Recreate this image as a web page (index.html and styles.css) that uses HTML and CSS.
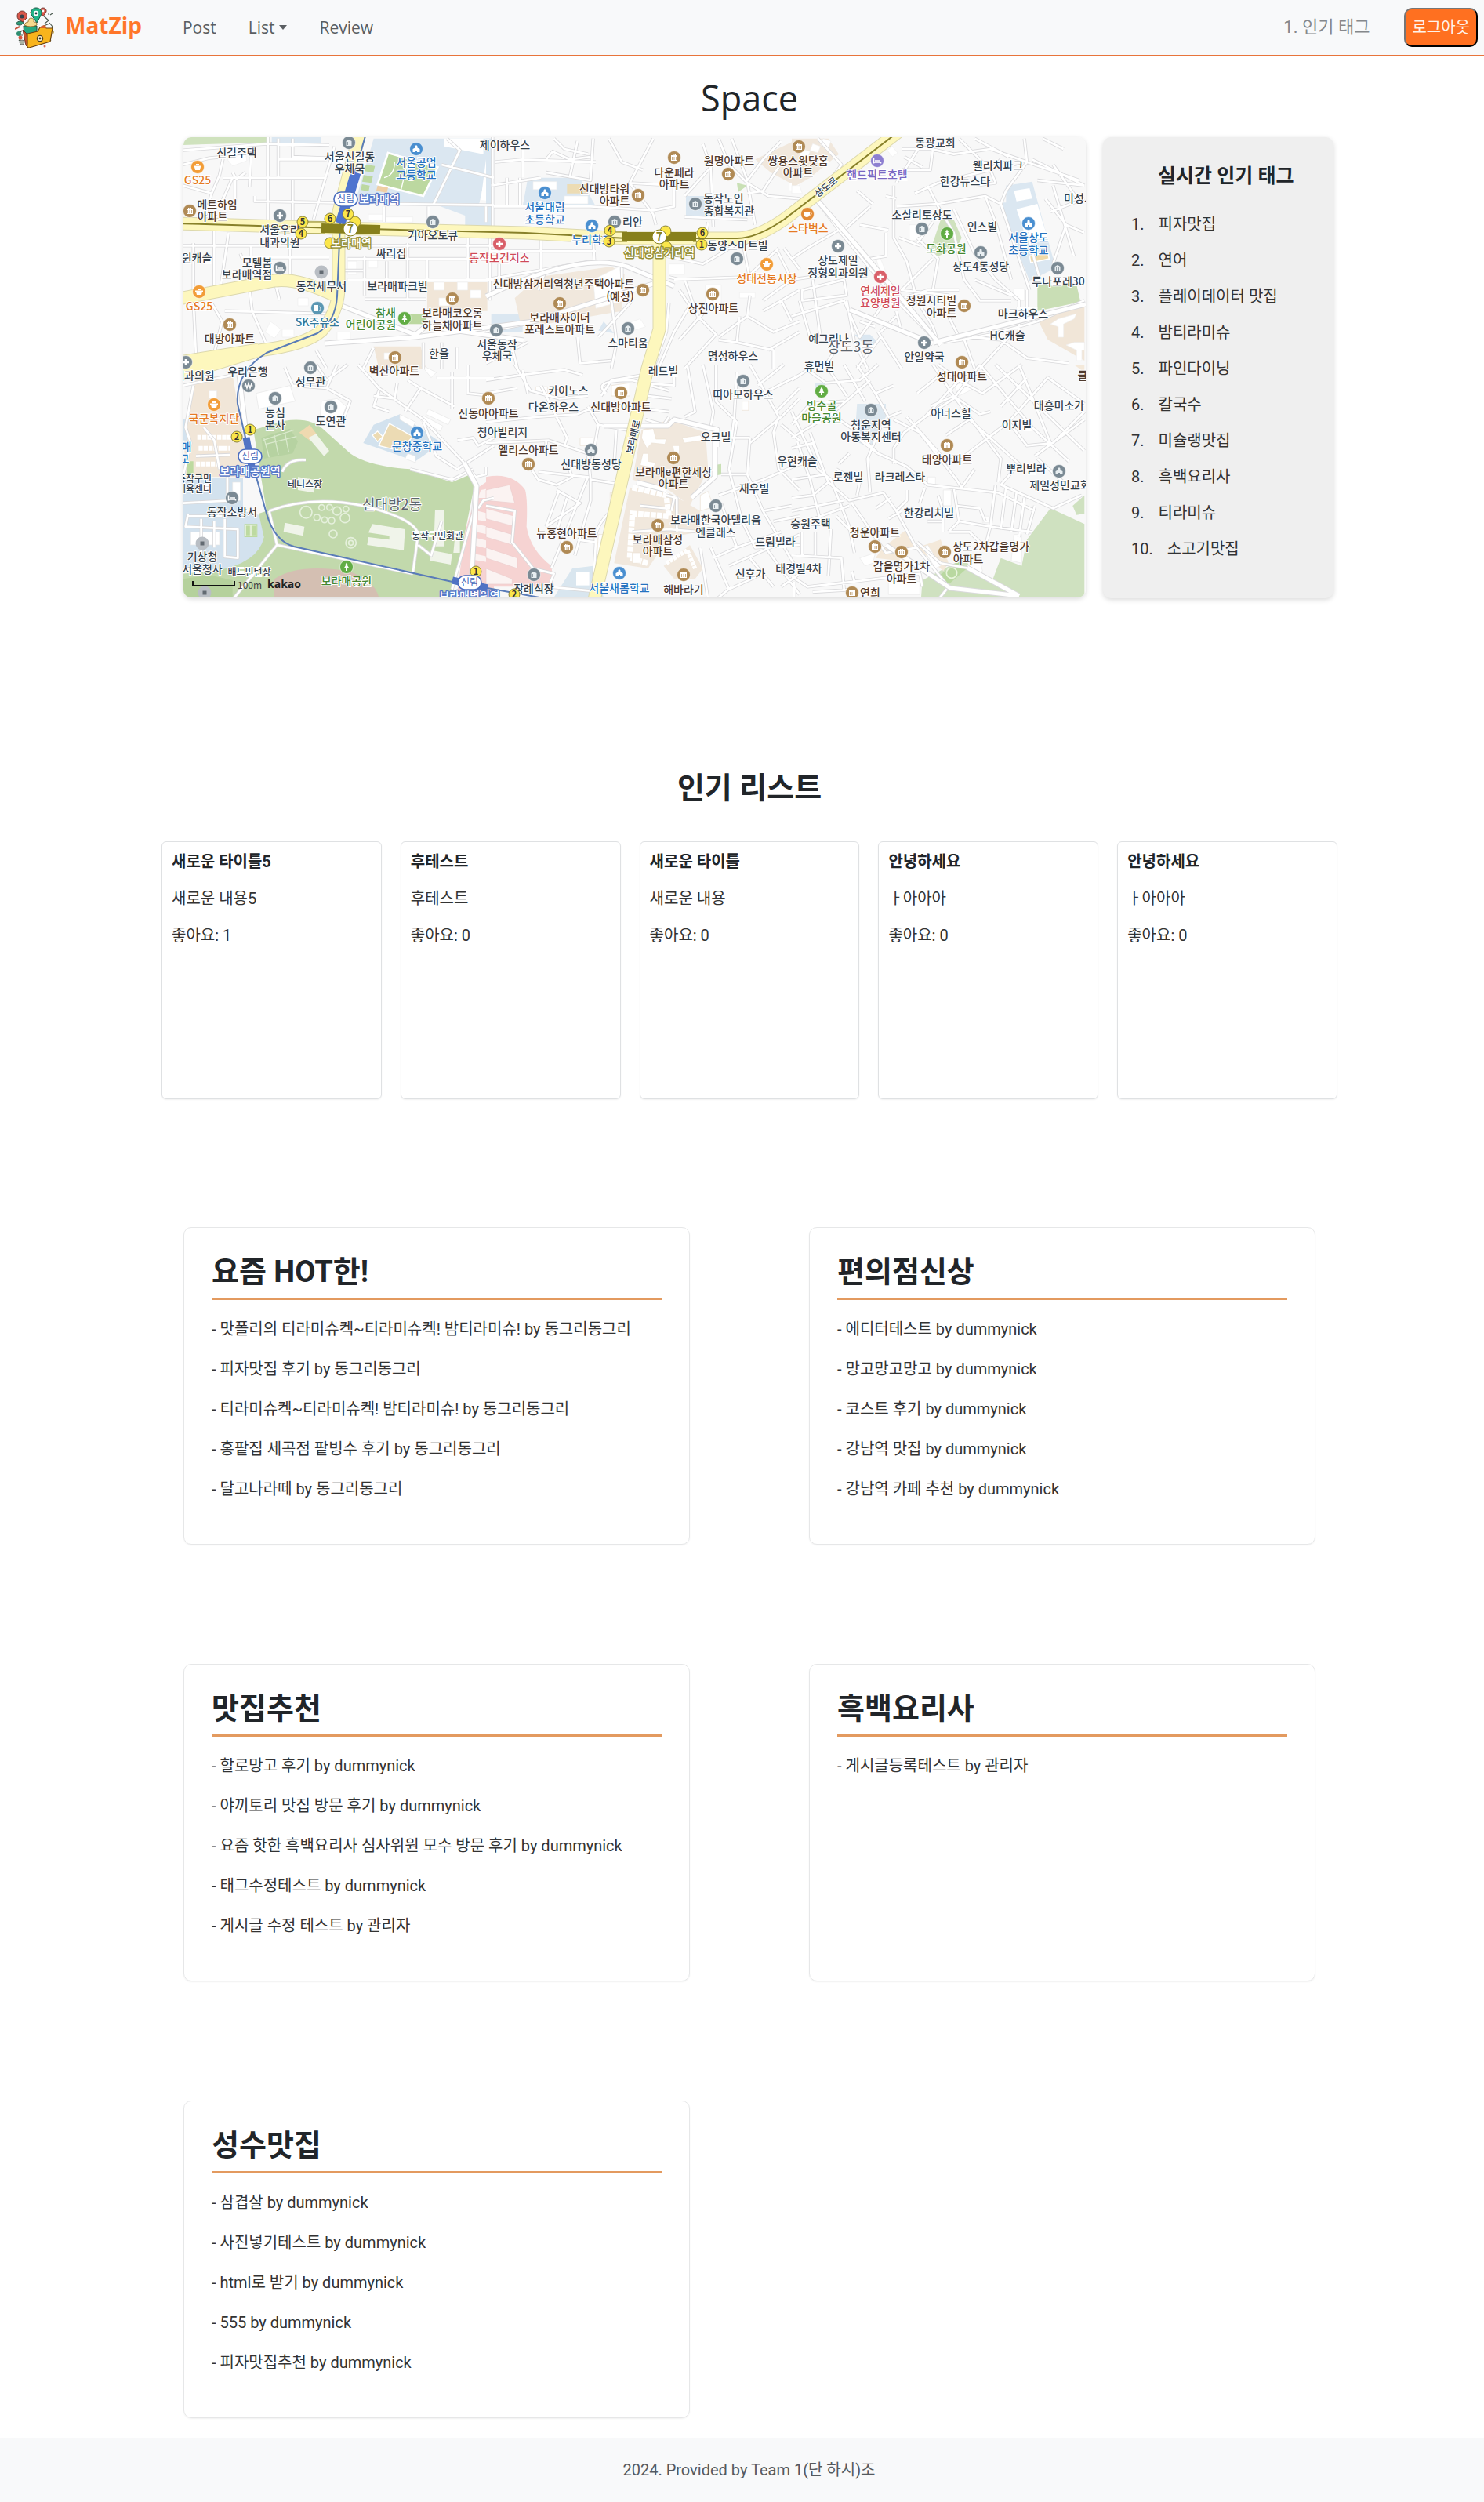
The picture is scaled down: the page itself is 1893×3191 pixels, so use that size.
FILE: index.html
```html
<!DOCTYPE html>
<html lang="ko">
<head>
<meta charset="utf-8">
<title>MatZip</title>
<meta name="viewport" content="width=device-width, initial-scale=1">
<link rel="stylesheet" href="styles.css">
</head>
<body>
<header class="navbar">
  <a class="brand" href="#">
    <svg class="brand-logo" viewBox="0 0 50 52" aria-hidden="true">
      <path d="M9 30l-5 5M8 40l-3 3M45 10l3-2M44 20l4 5-2 6M6 36h4M34 9l9 8-5 4M37 24l7-3M44 41l2 2" stroke="#4c5a50" stroke-width="1.2" fill="none"/>
      <path d="M1 21q6-6 10-1-4 6-10 1z" fill="#2f9b78" stroke="#1d4638" stroke-width=".8"/>
      <path d="M0 28l6-3" stroke="#c7553f" stroke-width="2"/>
      <circle cx="5" cy="34" r="3" fill="#2f8d70"/><circle cx="7" cy="39" r="2.5" fill="#d9573f"/><circle cx="9" cy="45" r="3" fill="#aab3a6" stroke="#555" stroke-width=".7"/>
      <circle cx="47" cy="32" r="2.4" fill="#fff" stroke="#b99b3e"/><circle cx="44" cy="41" r="1.3" fill="#4b6b58"/><circle cx="38" cy="50" r="1.5" fill="#e06a5a"/>
      <circle cx="20" cy="7" r="1" fill="#e06a5a"/><circle cx="43" cy="9" r="1" fill="#888"/>
      <path d="M9 5a6.500 6.500 0 0 1 6 9l-5 5-6-4a6.500 6.500 0 0 1 5-10z" fill="#d8574b" stroke="#5c2720" stroke-width=".8"/>
      <circle cx="9" cy="12" r="2.500" fill="#33404a"/>
      <path d="M36 1a4 4 0 0 1 4 5l-4 6-4-6a4 4 0 0 1 4-5z" fill="#d8574b" stroke="#5c2720" stroke-width=".8"/><circle cx="36" cy="5" r="1.400" fill="#fff"/>
      <path d="M27 1c5 0 8 4 7 8l-6 11-7-10c-2-5 2-9 6-9z" fill="#23b387" stroke="#145541" stroke-width="1"/>
      <circle cx="27" cy="8" r="3.200" fill="#fff"/><circle cx="27" cy="8" r="1.400" fill="#26343a"/>
      <path d="M11 24h17v14H12z" fill="#26a77e" stroke="#18483a"/>
      <path d="M12 23q1-4 5-4 0-5 4-5 4 1 3 5 5 0 4 4-8 4-16 0z" fill="#f7d98e" stroke="#8a6422" stroke-width=".8"/>
      <path d="M10 29l4 20 3 3-2-18z" fill="#c3502b" stroke="#5c2415" stroke-width=".8"/>
      <path d="M16 34l13-3 3-5 5-2 3 3 8 0-3 17-27 8q-3 0-2-5z" fill="#f8b41c" stroke="#6b4310" stroke-width="1.200"/>
      <path d="M32 27l2-3 5-1 1 4z" fill="#d8622d"/>
      <circle cx="32" cy="40" r="3.600" fill="#fff3cf" stroke="#4e4021" stroke-width="1.300"/><circle cx="32" cy="40" r="1.400" fill="#2e3a32"/>
    </svg>
    <span>MatZip</span>
  </a>
  <nav class="menu">
    <a href="#">Post</a>
    <a href="#" class="dropdown">List</a>
    <a href="#">Review</a>
  </nav>
  <div class="account">
    <span class="ticker">1. 인기 태그</span>
    <button type="button" class="logout">로그아웃</button>
  </div>
</header>

<main class="page">
  <h1 class="page-title">Space</h1>

  <section class="hero">
    <svg class="map" viewBox="234 175 1151 587" preserveAspectRatio="xMidYMid slice" role="img" aria-label="Map">
      <defs>
        <g id="apt"><circle r="8.500" fill="#b08a55" stroke="#fff" stroke-width=".6"/><path d="M-4-3h2v-1h1.500v1h1v-1h1.500v1h2v7h-8z" fill="#fff"/><path d="M-2.500-1v4M0-1v4M2.500-1v4" stroke="#b08a55" stroke-width=".7"/></g>
        <g id="bld"><circle r="8.500" fill="#7b8a94" stroke="#fff" stroke-width=".6"/><path d="M-3.500 4v-6l3.500-2 3.500 2v6z" fill="#e8eef1"/><path d="M-1.500-1v4M1.500-1v4" stroke="#7b8a94" stroke-width=".8"/></g>
        <g id="med"><circle r="8.500" fill="#7b8a94" stroke="#fff" stroke-width=".6"/><path d="M0-4v8M-4 0h8" stroke="#fff" stroke-width="2.600"/></g>
        <g id="hos"><circle r="8.500" fill="#d9606a" stroke="#fff" stroke-width=".6"/><path d="M0-4v8M-4 0h8" stroke="#fff" stroke-width="2.600"/></g>
        <g id="sch"><circle r="8.500" fill="#4a8fd0" stroke="#fff" stroke-width=".6"/><path d="M-4.500 4v-4l3-1.500v-2L0-5l1.500 1.500v2l3 1.500v4h-3.500v-2h-2v2z" fill="#fff"/></g>
        <g id="chu"><circle r="8.500" fill="#7b8a94" stroke="#fff" stroke-width=".6"/><path d="M-4.500 4v-4l3-1.500v-2L0-5l1.500 1.500v2l3 1.500v4h-3.500v-2h-2v2z" fill="#e8eef1"/></g>
        <g id="prk"><circle r="8.500" fill="#62ad45" stroke="#fff" stroke-width=".6"/><path d="M0-5.500l2 3.500h-1l2.500 4h-2.500v3h-2v-3h-2.500l2.500-4h-1z" fill="#fff"/></g>
        <g id="shp"><circle r="8.500" fill="#f29d38" stroke="#fff" stroke-width=".6"/><path d="M-4 0h8l-1 4h-6zM-5-1.500h10V0H-5zM-2-4h4v2h-4z" fill="#fff"/></g>
        <g id="caf"><circle r="8.500" fill="#e28a35" stroke="#fff" stroke-width=".6"/><path d="M-4.500-3h7.500v4q-1 3-3.800 3T-4.500 1z" fill="#fff"/><circle cx="3.500" cy="-.5" r="1.600" fill="none" stroke="#fff"/></g>
        <g id="htl"><circle r="8.500" fill="#8d7fd0" stroke="#fff" stroke-width=".6"/><path d="M-4.500-3.500v7M-4.500 2h9v1.500M-3 0H4" stroke="#fff" stroke-width="1.600" fill="none"/></g>
        <g id="inn"><circle r="8.500" fill="#7b8a94" stroke="#fff" stroke-width=".6"/><path d="M-4.500-3.500v7M-4.500 2h9v1.500M-3 0H4" stroke="#fff" stroke-width="1.600" fill="none"/></g>
        <g id="bnk"><circle r="8.500" fill="#7b8a94" stroke="#fff" stroke-width=".6"/><path d="M-4-3.500l2 7 2-7 2 7 2-7M-5.500 0h11" stroke="#fff" stroke-width="1.200" fill="none"/></g>
        <g id="gas"><circle r="8.500" fill="#5b97b3" stroke="#fff" stroke-width=".6"/><path d="M-4-4h5v8h-5z" fill="#fff"/><path d="M2-2l2 1v4h-2" stroke="#fff" fill="none"/></g>
        <g id="gov"><circle r="8.500" fill="#b9bec4"/><path d="M-2.500-2.500h5v5h-5z" fill="#626a72"/></g>
        <g id="ext"><circle r="7" fill="#fbe64b" stroke="#7d7730" stroke-width=".9"/></g>
        <g id="sta"><rect x="-15" y="-9" width="30" height="18" rx="9" fill="#fff" stroke="#4b6dc0" stroke-width="1.600"/></g>
        <g id="streets">
          <g transform="translate(230 170) scale(.3333)">
            <path d="M335 10V345M10 65L335 40L570 45M430 20V90L560 95M375 100L560 100M375 20V170M10 120L110 95L165 90L150 160L120 230L90 340M270 90L265 205M165 170H560M200 150L215 175L250 150M160 260L200 170M285 240V260L590 265M590 50L510 330M780 270L1200 275M1020 20L1070 65L970 270M1000 120L1200 170M780 280V340M950 280V350M10 430H580M230 460L235 475H570M130 360V620M50 420V620M185 380L150 620M270 430V540L240 580M420 430V540M640 480H1200M705 470V620M620 525H700M790 490V560M870 420V640M945 480V560M1100 400V560M640 560H1200M705 635H940M170 680L560 690M265 600L275 680L335 820M50 640L60 850M120 650L160 720L130 840M360 560L380 640M520 830L560 900M740 820L700 900M930 800V900M1000 800V900M1060 820V900M210 180V260M430 180V330M10 200L120 230M640 430L1200 430M1170 280V340"/>
          </g>
          <g transform="translate(620 170) scale(.3333)">
            <path d="M25 10V370M25 30H120M35 110L140 100L420 110M140 20V170M230 100L255 70L320 100L400 90M260 20L300 60L390 80M350 30L320 170M410 20L400 180L230 150M470 20L520 110L600 140M640 20L550 190L640 310L650 350M80 170V280M130 170V280M30 280H400L640 295L720 280V200L550 190M20 200L210 170M830 40L860 130L870 360M890 20L930 120L1000 190L1010 240L1030 350M940 20L1000 180L1060 100L1130 30M860 130L760 240M1000 190L1080 240L1200 250M1000 230L1060 220L1120 130M760 320L1000 330M840 400L850 340M10 450H420M210 400V560M410 410L415 490M0 560L400 490M15 400V640M520 500V570M690 470L830 500L950 430M720 560L1000 550L1120 440M700 650L690 760L640 900M740 600L780 660L720 760L660 900M760 560L810 700L880 770L760 900M830 690L740 790M890 780L1000 700L1010 620M970 700L960 800L890 790M1000 700L1100 760L1200 720M1060 680L1200 600M1110 440L1170 560L1060 640M1130 640L1170 720M1080 830L1200 760M960 800L1100 830V900M0 880L160 800M100 820L120 900M350 780L360 880L480 870M480 640L500 800L480 900M430 780L560 640M0 760L200 720M50 500V560M200 600L230 520M700 550L740 560M650 420V480M985 430L1010 560M1140 440L1200 520"/>
          </g>
          <g transform="translate(1010 170) scale(.3333)">
            <path d="M90 250L180 370L400 640L560 800M100 20L190 120L140 190M400 190L490 50L620 80L760 60L900 110L1100 180M420 60H540L530 140H420M430 90L500 130M390 200V400L440 490L480 640L540 740L560 800M250 220L310 270M360 240L400 250M470 230L560 190L760 140M400 280L560 270L740 240L800 270L910 600M520 200L560 280M640 20L760 140L780 190L700 200M830 90L700 20M890 20L900 110L820 220L800 270M960 20L1040 60M920 100L1120 200M1000 120L1100 260M970 250L1050 350L1000 500M1050 350L1120 380M990 300L1120 250M560 280L620 380L660 560L720 640L840 640M620 290L700 460L780 560L870 640V780M740 240L780 340L840 560M540 480L420 600L600 620M400 640L520 600L640 600M200 370L300 280M180 370L60 440L0 480M260 350L370 370M360 380V470L300 480M200 560L210 620L40 640V600L200 560M200 640L260 780L360 640M210 640L240 800L290 900M0 700L200 640M80 560L110 780M30 640L70 780M340 760L400 700M260 720L320 740M330 760L420 900M400 680L420 760M540 600L560 480L480 400M580 800L650 790L760 770L940 720L1120 640M660 790L700 900M690 780L800 790L900 860L1060 880M830 780L720 900M600 700L640 780M900 600V700M700 560L840 620M860 670H940M410 400L490 430M0 560L140 540M0 330L90 250M760 140L800 100M540 340L480 420M900 380L950 560M940 180L1120 200M1000 200L1080 470M250 900L340 780M120 900L160 840"/>
          </g>
          <g transform="translate(230 465) scale(.3333)">
            <path d="M50 80L20 240L40 300L10 430M90 240L130 290L150 400M60 350L190 345M10 80L200 40M400 10L430 80L560 90L650 140L620 220L560 230M560 90L600 0M520 0L560 60L640 0M680 0L760 90L930 210L1090 380L1130 430M830 70L820 130L740 120M860 180L920 90L870 60M920 90L1050 160M760 100L740 160L800 180M1040 30V170M1100 0V110L1200 120M980 50H1200M930 220L980 350L1060 400L1090 380M1060 290L1120 280L1140 310L1200 280M1090 380L1200 310M880 400L1040 440L1120 400M1130 430L1170 420V390M1130 430L1120 570L1040 860M30 570L20 620L220 630V740L170 735V590M80 590V740M130 600V700M10 530L190 520M30 580H160M180 430V530M1140 550L1160 520L1200 510M200 900L370 690L340 560M370 690L890 800M340 560Q500 500 700 540Q900 590 910 650L890 800M390 410Q410 360 480 365M910 690L960 730L1000 600"/>
          </g>
          <g transform="translate(620 465) scale(.3333)">
            <path d="M0 60L130 40L300 20L370 40M110 0L170 100L280 130L390 120M0 110L120 90M0 220L200 200L350 190L440 150M210 80L310 280L300 310M390 160L430 230L540 250M140 20L160 110M440 120L480 60L600 40M460 110Q400 60 560 60L700 100M0 300L240 290L390 340L400 440L530 460M230 290V330M160 380L200 440L270 460L330 430L310 380L480 380M200 410L390 430L250 780M270 480L360 530L230 620M280 480L230 620M310 510L270 640M400 440V520L340 730M490 550Q410 620 420 680L410 850M350 670L420 680M430 230L400 400M500 230L490 390M600 70L720 80V0M620 120L710 130M610 170L700 180M610 210L680 230L700 200M770 0L800 180L760 200M830 0L870 180L860 240M880 0V140L960 220L930 400L980 600L1030 700L1200 690M960 30L950 200L940 280H1010M1010 0L1120 200L1100 260L1120 400L1200 480M1010 280L1000 420L1060 560L1200 800M1010 300L1130 200L1200 130M1060 110L1200 40M1040 80L1140 0M1110 180L1200 90M1130 230L1200 290M890 500L1060 440L1200 380M900 530L960 700L1130 640M860 700L930 860L1060 800M930 770L1200 650M960 700L870 740M1010 740L1100 850M1060 560L1170 540M1000 420L900 420M1100 600L1200 580M1070 700L1200 880M1130 850L1200 800M820 700L850 900M940 850L880 900M0 540L110 560L100 680L180 780L260 800L240 850L440 870M720 510L710 560M560 640L700 630L820 640M690 500L730 510V640M590 540L690 550"/>
          </g>
          <g transform="translate(1010 465) scale(.3333)">
            <path d="M0 60L60 20L130 70L260 60L330 0M130 0L210 120M200 0L280 140M250 0L320 110L370 200L420 180M320 110L390 80M0 280L150 190L300 60M0 230L70 150L200 140M0 320L80 300L140 450L220 520L350 490L400 560L470 690L600 850L560 900M0 180L100 400L150 440L220 620L240 720M140 450L80 500L0 510M20 290L70 440L110 600M0 390L110 360M0 440L130 420M0 560L200 520M0 620L220 540M70 260L120 400M230 640L170 580M150 190L240 250L330 340L440 390L520 460L790 490L930 560M180 380L220 340M170 400L240 440M390 380V320L430 260L510 200L620 130L720 0M390 210L490 260L630 440L650 470L700 400M440 200L600 380M510 200L640 60L560 0M540 0L620 120L800 360L790 450M480 110L580 30M530 160L620 120L720 190L760 180M590 270L680 210L870 380L800 460M660 350L830 220L980 50L1120 150M720 0L920 240L1060 370M780 0L1120 330M870 0L990 300M640 60L730 110L880 0M830 220L900 310L1000 300L1120 180M800 160L900 50M930 350L1120 210M940 360L1040 450M800 460L1000 550L1110 500M620 470L640 600L600 640M510 470L490 530M440 480V520L400 560M250 500L260 450M320 550L380 510M370 590L420 560M640 600L760 620L920 640M630 540L720 550L740 600M780 460L760 620L740 700L680 640L600 640M820 470L800 630M860 490L840 640M890 510L870 660M930 540L900 650M520 600H580V640M560 500L580 560V600M340 240L290 360L300 490M330 340L250 280M230 530L360 720L480 700M0 730L190 740L200 860M40 640V730M90 640V730M150 630L140 810M0 810L60 850L240 830M230 790L240 830L490 800L500 850M10 830V900M80 870L250 860M480 680L570 760L680 780"/>
          </g>
        </g>
        <g id="avenues">
          <path d="M436 390L530 427L543 416L668 434M414 438L530 430L680 410L833 362M620 378Q740 320 800 340L860 365M1084 395L1190 438M1036 248L1090 310L1200 440M1191 437L1385 388M305 478L316 570M1130 695L1212 750L1300 760M1234 724L1300 760M770 543H852L860 535L915 548V570M812 615L850 625M882 635L912 608V550M600 765L608 620L592 590"/>
        </g>
      </defs>
      <rect x="234" y="175" width="1151" height="587" fill="#f8f8f8"/>

      <!-- land use -->
      <g transform="translate(230 170) scale(.3333)">
        <path d="M10 15h330v20L10 45z" fill="#cfe2bd"/><path d="M350 10h190v30H350zM740 20L1200 20L1130 330L970 270L670 260z" fill="#dbe7f1"/>
        <path d="M795 75L985 130L930 240L755 195z" fill="#bcd8a0" stroke="#fff" stroke-width="8"/><path d="M875 90L845 215M780 170q40-10 40-60" stroke="#fff" stroke-width="4" fill="none"/>
        <path d="M710 120l35 5-6 25-35-5zM702 160l35 5-6 25-35-5zM695 195l30 5-4 22-30-5z" fill="#bcd8a0"/><path d="M755 200l40 8-5 20-40-8z" fill="#efcfa5"/>
        <path d="M945 570h230v110H945zM740 815h180l20 85H760z" fill="#f1e6d8"/><path d="M850 690h90v40h-90z" fill="#bcd8a0"/>
        <path d="M1090 280h100v75h-100z" fill="#dbe7f1"/><path d="M1010 20h150v60l-150-30zM1170 100h30v160l-50-5z" fill="#fff"/>
        <path d="M180 100l70-25 5 30-55 20zM720 310h55v25h-55zM780 320h110v20H780zM450 630h40v30h-40zM640 490h35v50h-35zM720 485h35v30h-35zM345 720l40 30-25 35-35-25zM390 750h45v30h-45zM600 760h50v30h-50zM970 570h40v30h-40zM1060 570h40v30h-40zM1110 600h40v30h-40zM990 630h40v30h-40zM780 840h40v25h-40z" fill="#fff" stroke="#eee" stroke-width="2"/>
      </g>
      <g transform="translate(620 170) scale(.3333)">
        <path d="M0 20h20v340H0zM160 170h200l60 110H140zM765 240h90v80h-90zM20 690h120v70H20zM450 720l40 45-60-10z" fill="#dbe7f1"/><path d="M310 195h80v35h-80z" fill="#ecdcb4"/>
        <path d="M110 630L200 550L480 510L530 540L520 680L230 730L130 720zM1030 100L1200 20V210L1090 150z" fill="#f1e8dd"/>
        <path d="M960 190l40 10-35 25z" fill="#c9e0b5"/><path d="M180 185h90v30h-90zM410 560l100-50 20 130-110 30zM300 240h90v30h-90zM840 580h60v80h-60zM530 730l60-20 20 30-60 20zM700 500h60v40h-60zM1160 190h40v30h-40zM970 610h60v20h-60z" fill="#fff" stroke="#eee" stroke-width="2"/>
      </g>
      <g transform="translate(1010 170) scale(.3333)">
        <path d="M0 20h140l40 60-110 90-70 40z" fill="#f1e8dd"/><path d="M820 200l100-15 90 330-100 50-120-300 30 0zM240 770h60l30 30-50 10z" fill="#dbe7f1"/><path d="M850 220l60-10 10 40-60 10zM860 290l80-20 20 70 20 60-80 10z" fill="#fff"/><path d="M910 470l70-15 5 25-70 15z" fill="#efd9a8" stroke="#fff" stroke-width="5"/>
        <path d="M570 330h50l30 70-20 40-70 30-30-20z" fill="#cfe2bd"/><path d="M940 580h150l15 65-165 35z" fill="#c9deb5"/><path d="M940 710L1120 650V870L980 790z" fill="#f1e6d8"/>
        <path d="M120 20l30 10-10 25-30-10zM80 40l30 10-10 25-30-10zM40 60l30 10-10 25-30-10zM0 200h30l10 30H0zM320 470l20 10 20 50-20 10zM365 65l20-15 20 25-20 15zM450 350h40v60h-40zM850 595h40v45h-40zM990 730l30-20 70-20-10 20-40 20v50h-20v-40zM1050 810l30-10 40 0v30h-10v40h-20v-40z" fill="#fff" stroke="#eee" stroke-width="2"/>
      </g>
      <g transform="translate(230 465) scale(.3333)">
        <path d="M60 50L200 40L240 270L250 430L20 430L15 300z" fill="#f1e6d8"/><path d="M10 435H240V560L320 580V700L250 790L10 780zM10 210h15v80H10zM840 190L1000 300L900 370L700 300L740 230z" fill="#d3e2ee"/>
        <path d="M800 225l90 50-50 55-80-20zM735 270l20-15 20 20-20 20z" fill="#ecdbb4" stroke="#fff" stroke-width="4"/>
        <path d="M280 250L400 215Q500 200 550 250L650 340Q720 390 880 400L1040 450L1110 420L1130 440L1040 890H10V800L130 790Q300 760 320 660L300 570L330 560z" fill="#c2d9ac"/>
        <path d="M360 890V820Q450 760 640 790Q740 820 760 890z" fill="#d4bfb2"/><path d="M10 820l100-15 90 20v65H10z" fill="#b5d19c"/>
        <path d="M310 280l110-35 30 50-20 45-110 20z" fill="#b6d2a1"/><path d="M315 290l120-40M325 305l120-30M320 280l20 75M360 270l15 75M400 260l15 75" stroke="#d9e9cc" stroke-width="4"/>
        <path d="M455 260l40-30 30 40-30 20z" fill="#efd9b0"/><path d="M490 280l30-15 50 65-20 20zM400 605l75 15-5 35-75-15zM735 610l125 20-5 80-140-20 5-30 80 10v-15l-80-12zM975 555h35v140h-40zM960 710l80 15-5 40-80-15zM450 430l60 10v50l-60-10zM1050 670h20v50h-25z" fill="#f0f4ea"/>
        <path d="M245 610h50v50h-50zM25 370h25v50H25z" fill="#bddaa0"/><path d="M250 615h18v40h-18zM272 615h18v40h-18z" stroke="#fff" stroke-width="2" fill="none"/>
        <g fill="none" stroke="#e5f0dc" stroke-width="5"><circle cx="481" cy="565" r="23"/><circle cx="541" cy="547" r="11"/><circle cx="571" cy="546" r="11"/><circle cx="600" cy="560" r="16"/><circle cx="634" cy="553" r="11"/><circle cx="630" cy="587" r="18"/><circle cx="523" cy="585" r="12"/><circle cx="552" cy="594" r="11"/><circle cx="579" cy="597" r="12"/><circle cx="585" cy="648" r="15"/><circle cx="653" cy="682" r="20"/><circle cx="653" cy="682" r="9"/></g>
        <path d="M1140 470L1200 430V870H1060L1090 640z" fill="#f6d3d2"/><path d="M1150 480l50-10v40h-60zM1140 560l60 15v30l-60-10zM1130 610l70 15v30l-70-15zM1120 660l80 20v30l-80-20zM1110 720l90 20v20l-90-15z" fill="#fbf3f2"/>
        <path d="M290 110L420 80L440 140L300 170zM540 140l60-10 35 30-20 50-80-10zM110 100h30v30h-30zM40 640h110v50H40zM200 450h30v70h-30zM920 0l60 30-20 20zM840 190l60 30-10 20-50-30zM870 340l30 10v25l-40-15zM950 170l85 40-10 20-85-40zM930 195l75 40-10 20-75-40z" fill="#fff" stroke="#e6e6e6" stroke-width="2"/>
        <path d="M65 278H220M70 320H190M60 380H150" stroke="#fff" stroke-width="18" stroke-dasharray="16 3"/>
      </g>
      <g transform="translate(620 465) scale(.3333)">
        <path d="M0 430Q100 410 150 480Q160 520 155 620Q170 710 250 770L260 850H0z" fill="#f6d3d2"/><path d="M0 480l90-20 20 70-110-10zM0 550l110 30v40L0 590zM0 620l100 30v40L0 660zM0 700l120 40v40L0 740zM0 780l100 40v20H0z" fill="#fbf3f2" stroke="#eccccb" stroke-width="2"/>
        <path d="M330 780l80-10 40 120H260z" fill="#d9e6ef"/><path d="M345 795h50v50h-50z" fill="#fff"/>
        <path d="M595 250L700 210L840 260L850 400L780 540L700 480L560 440zM550 470L700 490L820 560V640L700 660L620 780L490 760zM680 770L780 690L830 780L800 820L720 820z" fill="#f1e8dd"/><path d="M870 385l30-5v40l-25 5z" fill="#c9e0b5"/>
        <path d="M560 470L690 500L700 580L560 570L550 740L620 760" fill="none" stroke="#fff" stroke-width="22" stroke-dasharray="20 4"/><path d="M690 760L770 710L800 780" fill="none" stroke="#fff" stroke-width="16" stroke-dasharray="13 3"/>
        <path d="M600 250l40-5 10 40 40 0-5 20-50-5-20 20-10-20-10-20zM750 280l70-10 10 20-70 10zM600 340h20v30l30 5-10 20-50-10zM820 500l30-15 20 60-50 15zM430 650h30l-5 75h-30zM475 490h20v40h-20zM560 720h30v40h-30zM980 140h25v35h-25zM480 80l70-10v50h-70zM190 85h45v25h-45zM360 280h50v30h-50zM715 310l25 0v30h-20z" fill="#fff" stroke="#eadfd2" stroke-width="2"/>
      </g>
      <g transform="translate(1010 465) scale(.3333)">
        <path d="M500 825L660 740L700 800L870 890H495zM770 820L800 740L880 770L900 670L990 550L1120 610V890H780zM1075 540l45-40v70l-30 5z" fill="#cfe1c0"/><path d="M560 810l80-60 30 30-80 70z" fill="#b9d8a0"/><circle cx="612" cy="797" r="20" fill="none" stroke="#e8f4dc" stroke-width="5"/>
        <path d="M250 150h110v50l-60 120-60-30zM90 70h40v40H90z" fill="#dde8f0"/><path d="M350 700l90-70 30 60-60 60-90-10zM480 700l90-30 30 90-20 30zM1080 0h40v30z" fill="#f4e9da"/>
        <path d="M620 80l50-20 30 30-60 30zM520 430h30v30h-30zM850 650h30v110l-40-10zM260 740l60-20-10 40-30 10zM500 700l20-10 50 80-20 10zM370 830h120v50H370zM670 770l50-20 10 40-20 10zM730 580h25v25h-25zM580 480h30v60h-30z" fill="#fff" stroke="#e8e8e8" stroke-width="2"/>
      </g>

      <!-- streets: casing, then surface -->
      <use href="#streets" class="street-case"/><use href="#streets" class="street-top"/>
      <use href="#avenues" class="avenue-case"/><use href="#avenues" class="avenue-top"/>
      <g class="trunk-case">
        <path d="M228 285L430 291L670 297L800 304H940Q965 304 1000 280L1150 165"/><path d="M459 170L432 270V370Q430 400 410 422Q390 440 330 447L228 478"/><path d="M228 381L350 358Q380 354 430 378M228 462L330 446M841 305V420L826 470L758 765"/>
      </g>
      <g class="trunk-top">
        <path d="M228 285L430 291L670 297L800 304H940Q965 304 1000 280L1150 165"/><path d="M459 170L432 270V370Q430 400 410 422Q390 440 330 447L228 478"/><path d="M228 381L350 358Q380 354 430 378M228 462L330 446M841 305V420L826 470L758 765"/>
      </g>
      <path d="M228 285L430 291L670 297L800 304H940Q965 304 1000 280L1150 165" fill="none" stroke="#88812a" stroke-width="2"/>
      <path d="M467 170L434 285L430 378Q428 410 405 425L340 450Q300 475 303 515L314 562L340 655Q350 690 375 697L577 742L705 765" fill="none" stroke="#5a7cb8" stroke-width="2"/>
      <path d="M454 220L434 285" stroke="#4f74cf" stroke-width="13"/><path d="M314 558L322 600M577 740L622 750" stroke="#5173c4" stroke-width="9"/>
      <path d="M410 291L485 293M794 302H888" stroke="#87801c" stroke-width="12"/>
      <path d="M390 283H414M390 298H414M784 296H800V308H784M890 298H884V308H890" fill="none" stroke="#87801c"/>

      <!-- places -->
      <g>
        <use href="#shp" x="252" y="213"/><use href="#apt" x="242" y="269"/><use href="#bld" x="445" y="182"/><use href="#sch" x="531" y="190"/><use href="#med" x="357" y="275"/><use href="#bld" x="552" y="283"/><use href="#inn" x="357" y="342"/><use href="#gov" x="410" y="347"/><use href="#shp" x="254" y="372"/><use href="#gas" x="405" y="393"/><use href="#prk" x="516" y="406"/><use href="#apt" x="577" y="381"/><use href="#apt" x="293" y="414"/><use href="#bld" x="633" y="421"/><use href="#apt" x="504" y="456"/><use href="#med" x="237" y="462"/><use href="#bnk" x="317" y="492"/><use href="#bld" x="396" y="469"/><use href="#bld" x="351" y="508"/><use href="#bld" x="422" y="519"/><use href="#shp" x="273" y="516"/><use href="#inn" x="296" y="635"/><use href="#gov" x="258" y="693"/><use href="#gov" x="261" y="756"/><use href="#prk" x="442" y="723"/><use href="#apt" x="623" y="508"/><use href="#sch" x="532" y="552"/>
        <use href="#sch" x="695" y="246"/><use href="#apt" x="814" y="249"/><use href="#sch" x="755" y="288"/><use href="#bld" x="784" y="283"/><use href="#apt" x="860" y="201"/><use href="#apt" x="929" y="222"/><use href="#apt" x="1019" y="187"/><use href="#bld" x="887" y="260"/><use href="#bld" x="940" y="330"/><use href="#caf" x="1030" y="273"/><use href="#shp" x="978" y="337"/><use href="#hos" x="637" y="311"/><use href="#apt" x="820" y="370"/><use href="#apt" x="714" y="387"/><use href="#bld" x="801" y="419"/><use href="#apt" x="909" y="375"/><use href="#apt" x="792" y="501"/><use href="#bld" x="948" y="486"/><use href="#apt" x="674" y="592"/><use href="#chu" x="754" y="574"/><use href="#apt" x="859" y="584"/><use href="#bld" x="913" y="645"/><use href="#apt" x="839" y="670"/><use href="#apt" x="723" y="698"/><use href="#apt" x="872" y="733"/><use href="#sch" x="790" y="731"/><use href="#bld" x="681" y="733"/>
        <use href="#htl" x="1119" y="205"/><use href="#bld" x="1176" y="292"/><use href="#prk" x="1208" y="298"/><use href="#sch" x="1312" y="285"/><use href="#chu" x="1251" y="322"/><use href="#bld" x="1349" y="342"/><use href="#med" x="1069" y="314"/><use href="#hos" x="1123" y="353"/><use href="#apt" x="1230" y="390"/><use href="#med" x="1179" y="437"/><use href="#apt" x="1227" y="462"/><use href="#prk" x="1048" y="499"/><use href="#bld" x="1111" y="523"/><use href="#apt" x="1208" y="568"/><use href="#chu" x="1351" y="601"/><use href="#apt" x="1116" y="697"/><use href="#apt" x="1150" y="704"/><use href="#apt" x="1205" y="704"/><use href="#apt" x="1087" y="756"/>
      </g>
      <g class="label">
        <text x="302" y="200">신길주택</text><text x="446" y="205">서울신길동</text><text x="446" y="220">우체국</text><text x="357" y="298">서울우리</text><text x="357" y="314">내과의원</text><text x="552" y="305">기아오토큐</text><text x="251" y="334">원캐슬</text><text x="499" y="328">싸리집</text><text x="328" y="340">모텔봄</text><text x="315" y="355">보라매역점</text><text x="410" y="370">동작세무서</text><text x="507" y="370">보라매파크빌</text><text x="560" y="456">한울</text><text x="634" y="444">서울동작</text><text x="634" y="459">우체국</text><text x="248" y="484">내과의원</text><text x="316" y="479">우리은행</text><text x="396" y="492">성무관</text><text x="351" y="531">농심</text><text x="351" y="547">본사</text><text x="422" y="542">도연관</text><text x="296" y="658">동작소방서</text><text x="258" y="715">기상청</text><text x="258" y="731">서울청사</text><text x="641" y="556">청아빌리지</text>
        <text x="644" y="190">제이하우스</text><text x="807" y="288">리안</text><text x="923" y="258">동작노인</text><text x="930" y="274">종합복지관</text><text x="941" y="318">동양스마트빌</text><text x="801" y="442">스마티움</text><text x="935" y="459">명성하우스</text><text x="846" y="478">레드빌</text><text x="725" y="503">카이노스</text><text x="706" y="524">다온하우스</text><text x="948" y="508">띠아모하우스</text><text x="913" y="562">오크빌</text><text x="754" y="597">신대방동성당</text><text x="1017" y="593">우현캐슬</text><text x="962" y="628">재우빌</text><text x="913" y="668">보라매한국아델리움</text><text x="913" y="684">엔클래스</text><text x="989" y="696">드림빌라</text><text x="1034" y="673">승원주택</text><text x="957" y="737">신후가</text><text x="1019" y="730">태경빌4차</text><text x="681" y="756">장례식장</text>
        <text x="1193" y="187">동광교회</text><text x="1273" y="216">웰리치파크</text><text x="1231" y="236">한강뉴스타</text><text x="1372" y="258">미성.</text><text x="1176" y="279">소살리토상도</text><text x="1253" y="294">인스빌</text><text x="1251" y="345">상도4동성당</text><text x="1350" y="364">루나포레30</text><text x="1069" y="337">상도제일</text><text x="1069" y="353">정형외과의원</text><text x="1305" y="405">마크하우스</text><text x="1285" y="433">HC캐슬</text><text x="1057" y="437">예그리나</text><text x="1179" y="460">안일약국</text><text x="1045" y="472">휴먼빌</text><text x="1111" y="547">청운지역</text><text x="1111" y="562">아동복지센터</text><text x="1213" y="532">아너스힐</text><text x="1351" y="522">대흥미소가</text><text x="1297" y="547">이지빌</text><text x="1309" y="603">뿌리빌라</text><text x="1352" y="624">제일성민교회</text><text x="1082" y="613">로젠빌</text><text x="1148" y="613">라크레스타</text><text x="1185" y="659">한강리치빌</text>
      </g>
      <g class="label small">
        <text x="248" y="615">동작구민</text><text x="248" y="628">체육센터</text><text x="389" y="622">테니스장</text><text x="558" y="688">동작구민회관</text><text x="318" y="734">배드민턴장</text>
        <text transform="translate(812 558) rotate(-77)">보라매로</text><text transform="translate(1056 242) rotate(-38)">상도로</text>
      </g>
      <g class="label area"><text x="500" y="650">신대방2동</text><text x="1085" y="449">상도3동</text></g>
      <g class="label home">
        <text x="277" y="266">메트하임</text><text x="271" y="281">아파트</text><text x="577" y="404">보라매코오롱</text><text x="577" y="420">하늘채아파트</text><text x="293" y="437">대방아파트</text><text x="503" y="478">벽산아파트</text><text x="623" y="532">신동아아파트</text><text x="771" y="246">신대방타워</text><text x="784" y="261">아파트</text><text x="860" y="225">다운페라</text><text x="860" y="240">아파트</text><text x="930" y="210">원명아파트</text><text x="1018" y="210">쌍용스윗닷홈</text><text x="1018" y="225">아파트</text><text x="719" y="367">신대방삼거리역청년주택아파트</text><text x="791" y="383">(예정)</text><text x="714" y="410">보라매자이더</text><text x="714" y="425">포레스트아파트</text><text x="910" y="398">상진아파트</text><text x="792" y="524">신대방아파트</text><text x="674" y="579">엘리스아파트</text><text x="859" y="607">보라매e편한세상</text><text x="859" y="622">아파트</text><text x="839" y="693">보라매삼성</text><text x="839" y="708">아파트</text><text x="723" y="685">뉴홍현아파트</text><text x="872" y="757">해바라기</text><text x="1188" y="388">정원시티빌</text><text x="1201" y="404">아파트</text><text x="1227" y="485">성대아파트</text><text x="1381" y="484">클</text><text x="1208" y="591">태양아파트</text><text x="1116" y="684">청운아파트</text><text x="1150" y="727">갑을명가1차</text><text x="1150" y="743">아파트</text><text x="1264" y="702">상도2차갑을명가</text><text x="1235" y="718">아파트</text><text x="1110" y="761">연희</text>
      </g>
      <g class="label school"><text x="531" y="212">서울공업</text><text x="531" y="228">고등학교</text><text x="695" y="269">서울대림</text><text x="695" y="285">초등학교</text><text x="755" y="311">누리학교</text><text x="532" y="574">문창중학교</text><text x="790" y="755">서울새롬학교</text><text x="1312" y="308">서울상도</text><text x="1312" y="324">초등학교</text><text x="238" y="575">매</text><text x="235" y="590">교</text></g>
      <g class="label shop"><text x="252" y="235">GS25</text><text x="254" y="396">GS25</text><text x="273" y="539">국군복지단</text><text x="978" y="360">성대전통시장</text><text x="1031" y="296">스타벅스</text></g>
      <g class="label park"><text x="492" y="404">참새</text><text x="473" y="419">어린이공원</text><text x="442" y="746">보라매공원</text><text x="1207" y="322">도화공원</text><text x="1048" y="522">빙수골</text><text x="1048" y="538">마을공원</text></g>
      <g class="label care"><text x="637" y="334">동작보건지소</text><text x="1123" y="376">연세제일</text><text x="1123" y="391">요양병원</text></g>
      <g class="label hotel"><text x="1119" y="228">핸드픽트호텔</text></g>
      <g class="label gas"><text x="405" y="416">SK주유소</text></g>

      <!-- stations and exits -->
      <g>
        <use href="#ext" x="453" y="283"/><use href="#ext" x="421" y="310"/><use href="#ext" x="421" y="279"/><use href="#ext" x="444" y="273"/><use href="#ext" x="386" y="283"/><use href="#ext" x="384" y="298"/><use href="#ext" x="778" y="294"/><use href="#ext" x="777" y="308"/><use href="#ext" x="849" y="295"/><use href="#ext" x="850" y="315"/><use href="#ext" x="896" y="297"/><use href="#ext" x="895" y="312"/><use href="#ext" x="319" y="548"/><use href="#ext" x="302" y="557"/><use href="#ext" x="607" y="729"/><use href="#ext" x="656" y="758"/>
        <use href="#sta" x="441" y="254"/><use href="#sta" x="319" y="582"/><use href="#sta" x="599" y="743"/>
        <circle cx="447" cy="292" r="9" fill="#fff" stroke="#87801c"/><circle cx="841" cy="302" r="9" fill="#fff" stroke="#87801c"/>
      </g>
      <g class="exit"><text x="421" y="283">6</text><text x="444" y="277">7</text><text x="386" y="287">5</text><text x="384" y="302">4</text><text x="778" y="298">4</text><text x="777" y="312">3</text><text x="896" y="301">6</text><text x="895" y="316">1</text><text x="319" y="552">1</text><text x="302" y="561">2</text><text x="607" y="733">1</text><text x="656" y="762">2</text></g>
      <g class="line-no"><text x="447" y="297">7</text><text x="841" y="307">7</text></g>
      <g class="line-name"><text x="441" y="258">신림</text><text x="319" y="586">신림</text><text x="599" y="747">신림</text></g>
      <g class="station blue"><text x="484" y="259">보라매역</text><text x="319" y="606">보라매공원역</text><text x="599" y="765">보라매병원역</text></g>
      <g class="station olive"><text x="448" y="315">보라매역</text><text x="841" y="327">신대방삼거리역</text></g>
      <path d="M246 741V747H299V741" fill="none" stroke="#111" stroke-width="2"/>
      <text class="scale" x="303" y="751">100m</text><text class="maker" x="341" y="750">kakao</text>
    </svg>

    <aside class="tags">
      <h2>실시간 인기 태그</h2>
      <ol>
        <li><span>1.</span>피자맛집</li><li><span>2.</span>연어</li><li><span>3.</span>플레이데이터 맛집</li><li><span>4.</span>밤티라미슈</li><li><span>5.</span>파인다이닝</li><li><span>6.</span>칼국수</li><li><span>7.</span>미슐랭맛집</li><li><span>8.</span>흑백요리사</li><li><span>9.</span>티라미슈</li><li><span>10.</span>소고기맛집</li>
      </ol>
    </aside>
  </section>

  <section class="popular">
    <h2>인기 리스트</h2>
    <div class="popular-grid">
      <article><h3>새로운 타이틀5</h3><p>새로운 내용5</p><p>좋아요: 1</p></article>
      <article><h3>후테스트</h3><p>후테스트</p><p>좋아요: 0</p></article>
      <article><h3>새로운 타이틀</h3><p>새로운 내용</p><p>좋아요: 0</p></article>
      <article><h3>안녕하세요</h3><p>ㅏ아아아</p><p>좋아요: 0</p></article>
      <article><h3>안녕하세요</h3><p>ㅏ아아아</p><p>좋아요: 0</p></article>
    </div>
  </section>

  <section class="boards">
    <article class="board"><h2>요즘 HOT한!</h2><ul>
      <li><a href="#">- 맛폴리의 티라미슈켁~티라미슈켁! 밤티라미슈! by 동그리동그리</a></li>
      <li><a href="#">- 피자맛집 후기 by 동그리동그리</a></li>
      <li><a href="#">- 티라미슈켁~티라미슈켁! 밤티라미슈! by 동그리동그리</a></li>
      <li><a href="#">- 홍팥집 세곡점 팥빙수 후기 by 동그리동그리</a></li>
      <li><a href="#">- 달고나라떼 by 동그리동그리</a></li></ul></article>
    <article class="board"><h2>편의점신상</h2><ul>
      <li><a href="#">- 에디터테스트 by dummynick</a></li>
      <li><a href="#">- 망고망고망고 by dummynick</a></li>
      <li><a href="#">- 코스트 후기 by dummynick</a></li>
      <li><a href="#">- 강남역 맛집 by dummynick</a></li>
      <li><a href="#">- 강남역 카페 추천 by dummynick</a></li></ul></article>
    <article class="board"><h2>맛집추천</h2><ul>
      <li><a href="#">- 할로망고 후기 by dummynick</a></li>
      <li><a href="#">- 야끼토리 맛집 방문 후기 by dummynick</a></li>
      <li><a href="#">- 요즘 핫한 흑백요리사 심사위원 모수 방문 후기 by dummynick</a></li>
      <li><a href="#">- 태그수정테스트 by dummynick</a></li>
      <li><a href="#">- 게시글 수정 테스트 by 관리자</a></li></ul></article>
    <article class="board"><h2>흑백요리사</h2><ul>
      <li><a href="#">- 게시글등록테스트 by 관리자</a></li></ul></article>
    <article class="board"><h2>성수맛집</h2><ul>
      <li><a href="#">- 삼겹살 by dummynick</a></li>
      <li><a href="#">- 사진넣기테스트 by dummynick</a></li>
      <li><a href="#">- html로 받기 by dummynick</a></li>
      <li><a href="#">- 555 by dummynick</a></li>
      <li><a href="#">- 피자맛집추천 by dummynick</a></li></ul></article>
  </section>
</main>

<footer class="footer">2024. Provided by Team 1(단 하시)조</footer>
</body>
</html>
```

FILE: styles.css
```css
* { box-sizing: border-box; }
body {
  margin: 0;
  color: #212529;
  background: #fff;
  font-family: Roboto, "Noto Sans CJK KR", sans-serif;
  font-size: 20px;
  font-weight: 400;
  line-height: 30px;
}
h1, h2, h3, p, ol, ul { margin: 0; padding: 0; }
ol, ul { list-style: none; }
a { color: inherit; text-decoration: none; }

/* navigation bar */
.navbar {
  display: flex;
  align-items: center;
  height: 72px;
  padding: 0 8px 0 19px;
  background: #f8f9fa;
  border-bottom: 2px solid #e8743b;
}
.brand {
  display: flex;
  align-items: center;
  gap: 14px;
  color: #ff7629;
  font-family: "Open Sans", sans-serif;
  font-size: 28px;
  font-weight: 700;
  line-height: 40px;
}
.brand span { padding-bottom: 6px; }
.brand-logo { width: 50px; height: 52px; }
.menu {
  display: flex;
  gap: 41px;
  margin-left: 52px;
  color: #5a5e62;
  font-family: "Open Sans", sans-serif;
  font-size: 21px;
  font-weight: 500;
}
.dropdown { display: flex; align-items: center; gap: 6px; }
.dropdown::after {
  content: "";
  border: 5px solid transparent;
  border-top: 6px solid #5a5e62;
  border-bottom: 0;
}
.account { display: flex; align-items: center; gap: 44px; margin-left: auto; }
.ticker { color: #85888b; font-size: 22px; }
.logout {
  height: 50px;
  padding: 0 8px;
  color: #fff3ea;
  background: #ff7020;
  border: 2px outset #222;
  border-radius: 10px;
  font: inherit;
}

/* page */
.page { padding: 0 187px 0 206px; }
.page-title {
  padding-top: 23px;
  font-family: "Open Sans", sans-serif;
  font-size: 45px;
  font-weight: 400;
  line-height: 60px;
  text-align: center;
}
.hero { display: flex; gap: 22px; margin-top: 20px; padding: 0 5px 0 28px; }
.map {
  flex: 1;
  min-width: 0;
  height: 587px;
  border-radius: 10px;
  box-shadow: 0 2px 6px rgba(0, 0, 0, .15);
}
.tags {
  width: 294px;
  height: 588px;
  padding: 30px 24px 0 36px;
  background: #efefef;
  border-radius: 10px;
  box-shadow: 0 2px 6px rgba(0, 0, 0, .15);
}
.tags h2 { padding-left: 34px; font-size: 25px; font-weight: 700; line-height: 40px; white-space: nowrap; }
.tags ol { margin-top: 18px; }
.tags li { height: 46px; line-height: 46px; color: #333; }
.tags span { display: inline-block; min-width: 15px; margin-right: 18px; }

/* map */
.street-case, .street-top, .avenue-case, .avenue-top, .trunk-case, .trunk-top { fill: none; stroke-linejoin: round; }
.street-case { stroke: #d9d9db; stroke-width: 13px; }
.street-top { stroke: #fff; stroke-width: 8px; }
.avenue-case { stroke: #d9d9db; stroke-width: 7px; }
.avenue-top { stroke: #fff; stroke-width: 5px; }
.trunk-case { stroke: #dcd8ae; stroke-width: 17px; }
.trunk-top { stroke: #fdf7bd; stroke-width: 15px; }
.map text { font-family: "Noto Sans CJK KR", sans-serif; }
.label, .station { font-size: 14px; text-anchor: middle; fill: #36424d; stroke: #fff; stroke-width: 2px; stroke-linejoin: round; paint-order: stroke; font-weight: 500; }
.label.small { font-size: 12px; }
.label.area { font-size: 18px; fill: #5d656d; font-weight: 400; }
.label.home { fill: #503a2e; }
.label.school { fill: #2673c0; }
.label.shop { fill: #e57b25; }
.label.park { fill: #44872f; }
.label.care { fill: #cf4a58; }
.label.hotel { fill: #7867c2; }
.label.gas { fill: #33799b; }
.station { fill: #fff; stroke-width: 3px; }
.station.blue { stroke: #5577c8; }
.station.olive { stroke: #968f36; }
.exit, .line-no, .line-name { text-anchor: middle; fill: #333; font-size: 11px; font-weight: 700; }
.line-no { fill: #87801c; font-size: 14px; }
.line-name { fill: #4467ba; font-size: 12px; font-weight: 400; }
.scale { font-size: 12px; fill: #444; }
.map .maker { font-family: "Open Sans", sans-serif; font-size: 14px; font-weight: 700; fill: #222; }

/* popular list */
.popular { padding-top: 215px; }
.popular h2 { font-size: 38px; font-weight: 700; line-height: 54px; text-align: center; }
.popular-grid { display: grid; grid-template-columns: repeat(5, 1fr); gap: 24px; margin-top: 41px; }
.popular article {
  height: 329px;
  padding: 10px 12px;
  border: 1px solid #dfe1e3;
  border-radius: 6px;
  box-shadow: 0 1px 2px rgba(0, 0, 0, .06);
}
.popular h3, .popular p { margin-bottom: 17px; font-size: 20px; line-height: 30px; }
.popular p { color: #333; }

/* boards */
.boards {
  display: grid;
  grid-template-columns: 1fr 1fr;
  gap: 152px;
  padding: 163px 28px 25px;
}
.board {
  height: 405px;
  padding: 29px 35px;
  border: 1px solid #e6e7e8;
  border-radius: 10px;
  box-shadow: 0 1px 2px rgba(0, 0, 0, .06);
}
.board h2 {
  padding-bottom: 6px;
  border-bottom: 3px solid #e39a5f;
  font-size: 38px;
  font-weight: 700;
  line-height: 54px;
}
.board ul { margin-top: 12px; color: #333; }
.board li { height: 51px; line-height: 51px; white-space: nowrap; }

.footer {
  height: 83px;
  padding-left: 18px;
  color: #555a5f;
  background: #f8f9fa;
  line-height: 83px;
  text-align: center;
}
```
